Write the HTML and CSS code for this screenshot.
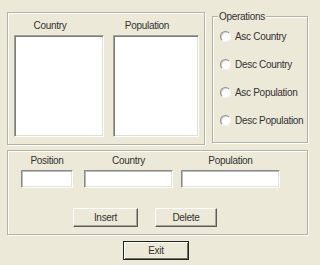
FILE: index.html
```html
<!DOCTYPE html>
<html lang="en">
<head>
<meta charset="UTF-8">
<meta name="viewport" content="width=device-width, initial-scale=1.0">
<link rel="stylesheet" href="styles.css">
</head>
<body>

<div id="form">
  <div class="top">
    <div class="group lists">
      <div class="col col1">
        <span class="caption">Country</span>
        <div class="listbox"></div>
      </div>
      <div class="col col2">
        <span class="caption">Population</span>
        <div class="listbox"></div>
      </div>
    </div>
    <div class="group ops">
      <span class="legend">Operations</span>
      <label class="radio"><span class="dot"></span>Asc Country</label>
      <label class="radio"><span class="dot"></span>Desc Country</label>
      <label class="radio"><span class="dot"></span>Asc Population</label>
      <label class="radio"><span class="dot"></span>Desc Population</label>
    </div>
  </div>

  <div class="group edit">
    <div class="fields">
      <div class="field f-pos">
        <span>Position</span>
        <div class="textbox"></div>
      </div>
      <div class="field f-country">
        <span>Country</span>
        <div class="textbox"></div>
      </div>
      <div class="field f-pop">
        <span>Population</span>
        <div class="textbox"></div>
      </div>
    </div>
    <div class="actions">
      <button class="btn insert">Insert</button>
      <button class="btn delete">Delete</button>
    </div>
  </div>

  <button class="btn exit">Exit</button>
</div>

</body>
</html>
```

FILE: styles.css
```css
body {
  margin: 0;
  overflow: hidden;
  background-color: #ece9d8;
  font-family: "Liberation Sans", Arial, sans-serif;
  font-size: 10px;
  letter-spacing: -0.3px;
  line-height: 13px;
  color: #333;
  white-space: nowrap;
}

#form {
  width: 320px;
  height: 265px;
  padding: 12px 0 0 7px;
  box-sizing: border-box;
}

.top {
  display: flex;
  align-items: flex-start;
  gap: 7px;
}

/* etched group frame */
.group {
  box-sizing: border-box;
  border: 1px solid #b5b2a2;
  box-shadow: inset 1px 1px 0 #fff, 1px 1px 0 #fff;
  position: relative;
}

.lists {
  width: 198px;
  height: 133px;
  display: flex;
  gap: 9px;
  padding: 6px 0 0 6px;
}

.col {
  display: flex;
  flex-direction: column;
}
.col1 { width: 90px; }
.col2 { width: 86px; }

.caption {
  text-align: center;
  padding-right: 18px;
  margin-bottom: 3px;
}

.listbox {
  height: 102px;
  box-sizing: border-box;
  background: #fff;
  border: 1px solid;
  border-color: #a09f98 #fff #fff #a09f98;
  box-shadow: inset 1px 1px 0 #7d7c76, inset -1px -1px 0 #e2dfd2;
}

.ops {
  width: 96px;
  height: 127px;
  margin-top: 4px;
  display: flex;
  flex-direction: column;
  gap: 15px;
  padding: 13px 0 0 7px;
}

.legend {
  position: absolute;
  top: -7px;
  left: 5px;
  padding: 0 1px;
  background-color: #ece9d8;
}

.radio {
  display: flex;
  align-items: center;
  gap: 4px;
  height: 13px;
}

.dot {
  flex: none;
  width: 11px;
  height: 11px;
  box-sizing: border-box;
  border-radius: 50%;
  background: #fff;
  border: 1px solid;
  border-color: #8f8f8f #f4f4f4 #f4f4f4 #8f8f8f;
  box-shadow: inset 1px 1px 0 #d6d3c6;
}

.edit {
  width: 301px;
  height: 85px;
  margin-top: 5px;
  padding: 3px 0 0 13px;
}

.fields {
  display: flex;
}

.field {
  display: flex;
  flex-direction: column;
  align-items: center;
  gap: 3px;
}
.f-pos { width: 52px; margin-right: 11px; }
.f-country { width: 89px; margin-right: 8px; }
.f-pop { width: 99px; }

.textbox {
  width: 100%;
  height: 18px;
  box-sizing: border-box;
  background: #fff;
  border: 1px solid;
  border-color: #8a8a8a #fff #fff #8a8a8a;
  box-shadow: inset 1px 1px 0 #b9b9b9, inset -1px -1px 0 #e6e3d6;
}

.actions {
  display: flex;
  gap: 17px;
  margin: 20px 0 0 52px;
}

.btn {
  font-family: inherit;
  font-size: 10px;
  letter-spacing: -0.3px;
  color: #333;
  height: 19px;
  padding: 0;
  box-sizing: border-box;
  background-color: #ece9d8;
  border: 1px solid;
  border-color: #fff #5a5a5a #5a5a5a #fff;
  box-shadow: inset -1px -1px 0 #a8a596;
}
.insert { width: 65px; }
.delete { width: 62px; }

.exit {
  display: block;
  width: 66px;
  margin: 6px 0 0 116px;
  border-color: #222;
  box-shadow: inset 1px 1px 0 #fff, inset -1px -1px 0 #6e6d66;
}
```
